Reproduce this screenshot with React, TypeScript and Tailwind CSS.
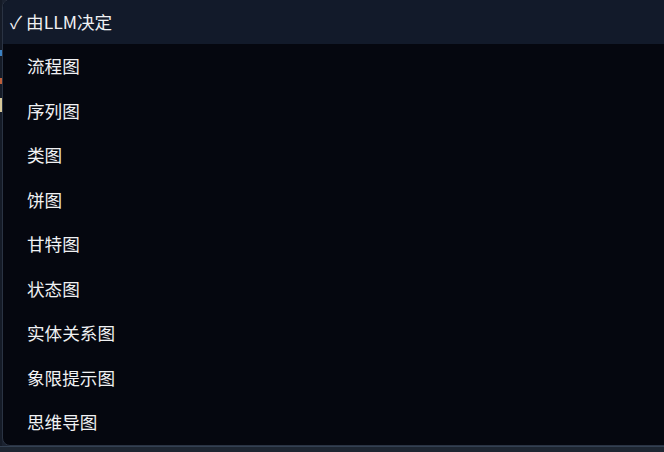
import React from "react";

const items = ["流程图", "序列图", "类图", "饼图", "甘特图", "状态图", "实体关系图", "象限提示图", "思维导图"];

export default function App() {
  return (
    <div
      className="w-[664px] h-[452px] overflow-hidden bg-[#1b2230] flex flex-col"
      style={{ fontFamily: '"Noto Sans CJK SC", "Liberation Sans", sans-serif' }}
    >
      <div className="flex h-[446px] shrink-0">
        <div className="w-[2px] shrink-0 flex flex-col bg-[#151b27]">
          <div className="h-[50px]" />
          <div className="h-[6px] bg-[#3b82c4]" />
          <div className="h-[22px]" />
          <div className="h-[6px] bg-[#c0603a]" />
          <div className="h-[14px]" />
          <div className="h-[14px] bg-[#d8c89a]" />
          <div className="flex-1" />
        </div>
        <div className="flex-1 mr-[-12px] mt-[-1px] rounded-lg border border-[#2a3343] bg-[#05070f] overflow-hidden flex flex-col">
          <div className="h-[44px] shrink-0 flex items-center pl-[7px] bg-[#121a2a] text-[17.6px] text-[#f0f1f3]">
            <span className="mr-[4px]">✓</span>
            <span>由LLM决定</span>
          </div>
          {items.map((t) => (
            <div key={t} className="h-[44.5px] shrink-0 flex items-center pl-[24px] text-[17.6px] text-[#f0f1f3]">
              {t}
            </div>
          ))}
        </div>
      </div>
      <div className="h-[1px] bg-[#334052]" />
      <div className="flex-1 bg-[#1e2632]" />
    </div>
  );
}
